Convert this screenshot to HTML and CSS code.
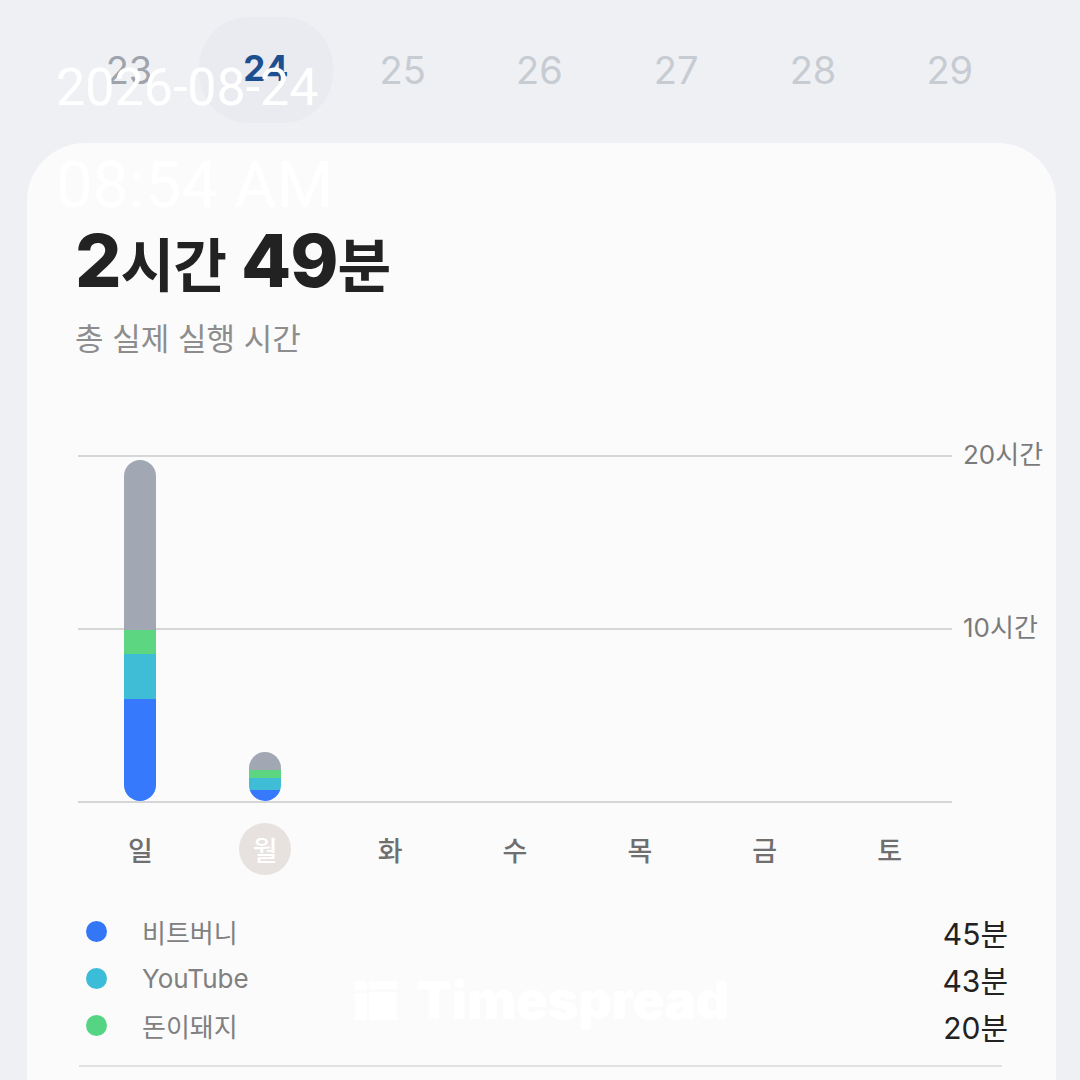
FILE: index.html
```html
<!DOCTYPE html>
<html lang="ko">
<head>
  <meta charset="UTF-8">
  <meta name="viewport" content="width=device-width, initial-scale=1.0">
  <title>Screen Time</title>
  <link rel="stylesheet" href="styles.css">
</head>
<body>

  <div class="screen">
    <!-- capture timestamp -->
    <div class="stamp">
      <div class="stamp-date">2026-08-24</div>
      <div class="stamp-time">08:54 AM</div>
    </div>

    <!-- week strip -->
    <nav class="date-strip">
      <div class="date past">23</div>
      <div class="date selected">24</div>
      <div class="date">25</div>
      <div class="date">26</div>
      <div class="date">27</div>
      <div class="date">28</div>
      <div class="date">29</div>
    </nav>

    <section class="card">
      <h1 class="total">2<span class="unit">시간</span> 49<span class="unit">분</span></h1>
      <p class="total-label">총 실제 실행 시간</p>

      <div class="chart">
        <div class="chart-body">
          <div class="plot">
            <div class="grid-mid"></div>
            <div class="bars">
              <div class="col">
                <div class="bar">
                  <div class="seg other" style="height:170px"></div>
                  <div class="seg green" style="height:24px"></div>
                  <div class="seg cyan" style="height:45px"></div>
                  <div class="seg blue" style="height:102px"></div>
                </div>
              </div>
              <div class="col">
                <div class="bar">
                  <div class="seg other" style="height:18px"></div>
                  <div class="seg green" style="height:8px"></div>
                  <div class="seg cyan" style="height:12px"></div>
                  <div class="seg blue" style="height:11px"></div>
                </div>
              </div>
              <div class="col"></div>
              <div class="col"></div>
              <div class="col"></div>
              <div class="col"></div>
              <div class="col"></div>
            </div>
          </div>
          <div class="axis">
            <span>20시간</span>
            <span>10시간</span>
          </div>
        </div>

        <div class="days">
          <div class="day">일</div>
          <div class="day"><span class="today">월</span></div>
          <div class="day">화</div>
          <div class="day">수</div>
          <div class="day">목</div>
          <div class="day">금</div>
          <div class="day">토</div>
        </div>
      </div>

      <ul class="legend">
        <li><span class="dot blue"></span><span class="app">비트버니</span><span class="mins">45분</span></li>
        <li><span class="dot cyan"></span><span class="app">YouTube</span><span class="mins">43분</span></li>
        <li><span class="dot green"></span><span class="app">돈이돼지</span><span class="mins">20분</span></li>
      </ul>
      <div class="divider"></div>

      <!-- watermark -->
      <div class="watermark">
        <svg width="42" height="39" viewBox="0 0 42 39">
          <rect x="0" y="0" width="12" height="9" rx="2" fill="#fff"/>
          <rect x="0" y="12" width="12" height="27" fill="#fff"/>
          <rect x="14" y="0" width="28" height="8" fill="#fff"/>
          <rect x="14" y="11" width="28" height="28" fill="#fff"/>
        </svg>
        <span>Timespread</span>
      </div>
    </section>
  </div>

</body>
</html>
```

FILE: styles.css
```css
* {
  box-sizing: border-box;
}
body {
  margin: 0;
  background: #eff0f4;
  font-family: Inter, "Noto Sans CJK KR", sans-serif;
}
.screen {
  position: relative;
  width: 1080px;
  height: 1080px;
  overflow: hidden;
}

/* timestamp over the screenshot */
.stamp {
  position: absolute;
  left: 56px;
  top: 58px;
  z-index: 5;
  color: #fff;
  font-family: Roboto, sans-serif;
}
.stamp-date {
  font-size: 52px;
  line-height: 60px;
}
.stamp-time {
  margin-top: 32px;
  font-size: 65px;
  line-height: 70px;
}

/* week strip */
.date-strip {
  display: flex;
  gap: 2.8px;
  padding: 17px 0 0 62px;
}
.date {
  width: 134px;
  height: 106px;
  border-radius: 50px;
  display: flex;
  align-items: center;
  justify-content: center;
  font-size: 38px;
  color: #c7cbd2;
}
.date.past {
  color: #9ea3ac;
}
.date.selected {
  background: #eaebf0;
  color: #1d4e90;
  font-size: 35px;
  font-weight: 700;
  padding-bottom: 4px;
}

/* card */
.card {
  position: relative;
  margin: 20px 24px 0 27px;
  height: 960px;
  padding: 78px 0 0 48px;
  background: #fbfbfb;
  border-radius: 58px 58px 0 0;
}
.total {
  margin: 0;
  font-size: 73px;
  line-height: 80px;
  font-weight: 800;
  color: #222;
  letter-spacing: -1px;
}
.total .unit {
  font-family: "Noto Sans CJK KR", sans-serif;
  font-size: 0.8em;
  font-weight: 700;
}
.total-label {
  margin: 16px 0 0;
  font-family: "Noto Sans CJK KR", sans-serif;
  font-size: 31px;
  line-height: 38px;
  color: #8d8d8d;
}

/* chart */
.chart {
  margin: 99px 0 0 3px;
}
.chart-body {
  display: flex;
}
.plot {
  position: relative;
  width: 874px;
  height: 348px;
  border-top: 2px solid #d6d6d8;
  border-bottom: 2px solid #d6d6d8;
}
.grid-mid {
  position: absolute;
  left: 0;
  right: 0;
  top: 171px;
  border-top: 2px solid #d6d6d8;
}
.bars {
  position: relative;
  display: flex;
  align-items: flex-end;
  height: 100%;
}
.col {
  flex: 1;
  display: flex;
  justify-content: center;
}
.bar {
  width: 32px;
  border-radius: 16px;
  overflow: hidden;
  display: flex;
  flex-direction: column;
}
.seg.other { background: #a1a8b3; }
.seg.green { background: #5cd681; }
.seg.cyan { background: #3fbdd7; }
.seg.blue { background: #3679fd; }

.axis {
  display: flex;
  flex-direction: column;
  margin: -12px 0 0 11px;
}
.axis span {
  height: 173px;
  line-height: 24px;
  font-size: 26px;
  color: #7b7b7b;
  white-space: nowrap;
}

.days {
  display: flex;
  width: 874px;
  margin-top: 20px;
}
.day {
  flex: 1;
  height: 52px;
  display: flex;
  align-items: center;
  justify-content: center;
  font-family: "Noto Sans CJK KR", sans-serif;
  font-size: 27px;
  font-weight: 500;
  color: #6f6f6f;
}
.today {
  width: 52px;
  height: 52px;
  border-radius: 50%;
  background: #e7e2e0;
  color: #fff;
  display: flex;
  align-items: center;
  justify-content: center;
}

/* legend */
.legend {
  list-style: none;
  margin: 33px 0 0 4px;
  padding: 0;
  width: 929px;
}
.legend li {
  display: flex;
  align-items: center;
  height: 47px;
  padding-left: 7px;
}
.dot {
  width: 21px;
  height: 21px;
  border-radius: 50%;
  margin-right: 35px;
}
.dot.blue { background: #3477f6; }
.dot.cyan { background: #3bbcd8; }
.dot.green { background: #55d483; }
.app {
  flex: 1;
  font-size: 26px;
  color: #808080;
}
.mins {
  font-size: 30px;
  color: #222;
}
.divider {
  margin: 16px 0 0 4px;
  width: 923px;
  border-top: 2px solid #e2e2e2;
}

.watermark {
  position: absolute;
  left: 328px;
  top: 826px;
  display: flex;
  align-items: center;
  gap: 19px;
  color: #fff;
  font-size: 52px;
  font-weight: 900;
  letter-spacing: 0;
}
```
